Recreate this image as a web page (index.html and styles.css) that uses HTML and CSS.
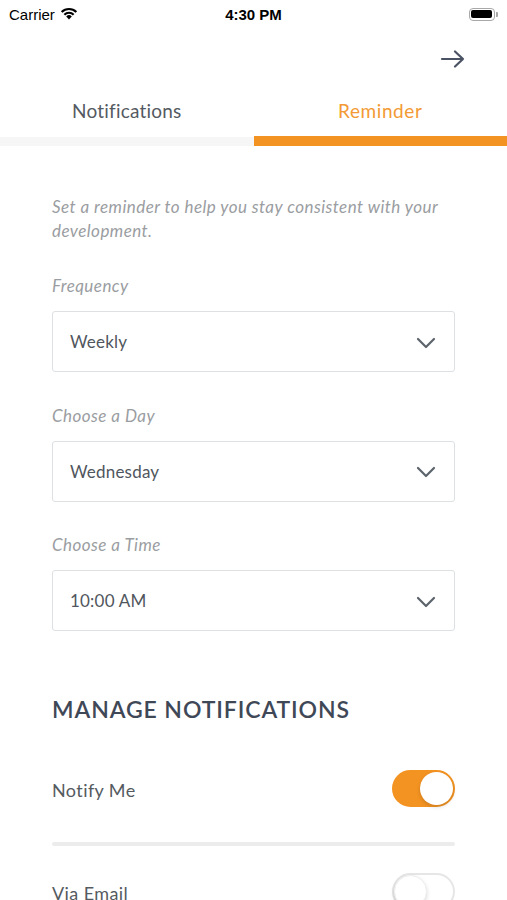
FILE: index.html
```html
<!DOCTYPE html>
<html>
<head>
<meta charset="utf-8">
<link rel="stylesheet" href="styles.css">
</head>
<body>
<div class="screen">
  <div class="status">
    <div class="carrier">Carrier
      <svg class="wifi" width="18" height="13" viewBox="0 0 18 13"><path d="M9 12.5 L6.2 9.4 A4 4 0 0 1 11.8 9.4 Z" fill="#000"/><path d="M3.6 6.9 A7.7 7.7 0 0 1 14.4 6.9 L12.9 8.4 A5.6 5.6 0 0 0 5.1 8.4 Z" fill="#000"/><path d="M0.9 4.2 A11.6 11.6 0 0 1 17.1 4.2 L15.6 5.7 A9.5 9.5 0 0 0 2.4 5.7 Z" fill="#000"/></svg>
    </div>
    <div class="time">4:30 PM</div>
    <div class="battery"><div class="batt-body"><div class="batt-fill"></div></div><div class="batt-tip"></div></div>
  </div>
  <div class="topbar">
    <svg class="arrow" width="26" height="20" viewBox="0 0 26 20"><path d="M2 10 H23 M15 2.5 L23 10 L15 17.5" fill="none" stroke="#4a5263" stroke-width="2.2" stroke-linecap="round" stroke-linejoin="round"/></svg>
  </div>
  <div class="tabs">
    <div class="tab"><span class="tab-label">Notifications</span><div class="tab-bar"></div></div>
    <div class="tab active"><span class="tab-label">Reminder</span><div class="tab-bar"></div></div>
  </div>
  <div class="content">
    <p class="desc">Set a reminder to help you stay consistent with your development.</p>
    <div class="field">
      <div class="label">Frequency</div>
      <div class="select"><span>Weekly</span><svg class="chev" width="20" height="12" viewBox="0 0 20 12"><path d="M2 2 L10 10 L18 2" fill="none" stroke="#5d636b" stroke-width="2.2" stroke-linecap="round" stroke-linejoin="round"/></svg></div>
    </div>
    <div class="field">
      <div class="label">Choose a Day</div>
      <div class="select"><span>Wednesday</span><svg class="chev" width="20" height="12" viewBox="0 0 20 12"><path d="M2 2 L10 10 L18 2" fill="none" stroke="#5d636b" stroke-width="2.2" stroke-linecap="round" stroke-linejoin="round"/></svg></div>
    </div>
    <div class="field">
      <div class="label">Choose a Time</div>
      <div class="select"><span>10:00 AM</span><svg class="chev" width="20" height="12" viewBox="0 0 20 12"><path d="M2 2 L10 10 L18 2" fill="none" stroke="#5d636b" stroke-width="2.2" stroke-linecap="round" stroke-linejoin="round"/></svg></div>
    </div>
    <h2 class="section">MANAGE NOTIFICATIONS</h2>
    <div class="row">
      <span class="row-label">Notify Me</span>
      <div class="switch on"><div class="knob"></div></div>
    </div>
    <div class="sep"></div>
    <div class="row">
      <span class="row-label">Via Email</span>
      <div class="switch"><div class="knob"></div></div>
    </div>
  </div>
</div>
</body>
</html>
```
FILE: styles.css
```css
* { box-sizing: border-box; }
html, body { margin: 0; padding: 0; background: #fff; }
body { font-family: Lato, "Noto Sans", sans-serif; color: #4f555c; }
.screen { width: 507px; height: 900px; overflow: hidden; }

.status { height: 28px; display: flex; align-items: center; justify-content: space-between; padding: 0 9px; font-family: "Liberation Sans", Arial, sans-serif; color: #000; }
.carrier { font-size: 15px; display: flex; align-items: center; gap: 5px; width: 120px; }
.wifi { margin-top: -2px; }
.time { font-size: 15px; font-weight: bold; }
.battery { width: 120px; display: flex; justify-content: flex-end; align-items: center; }
.batt-body { width: 26px; height: 13px; border: 1px solid #a8a8a8; border-radius: 4px; padding: 1.5px; }
.batt-fill { width: 100%; height: 100%; background: #000; border-radius: 2px; }
.batt-tip { width: 2px; height: 5px; background: #a8a8a8; border-radius: 0 1px 1px 0; margin-left: 1px; }

.topbar { height: 62px; display: flex; justify-content: flex-end; align-items: center; padding: 0 41px 0 0; }

.tabs { display: flex; }
.tab { flex: 1; display: flex; flex-direction: column; align-items: center; }
.tab-label { font-size: 19px; color: #545a62; height: 47px; line-height: 42px; letter-spacing: 0.2px; }
.tab.active .tab-label { color: #f39a34; letter-spacing: 0.6px; }
.tab-bar { width: 100%; height: 9px; background: #f6f6f6; }
.tab.active .tab-bar { background: #f39322; height: 10px; margin-top: -1px; }

.content { padding: 49px 52px 0 52px; }
.desc { margin: 0; font-style: italic; font-size: 17px; letter-spacing: 0.45px; line-height: 24px; color: #9a9da1; }
.field { margin-top: 31px; }
.field + .field { margin-top: 31.5px; }
.label { font-style: italic; font-size: 17px; letter-spacing: 0.45px; line-height: 24px; color: #9a9da1; }
.select { margin-top: 13px; height: 61px; border: 1.5px solid #dde1e4; border-radius: 3px; display: flex; align-items: center; justify-content: space-between; padding: 0 18px 0 17px; font-size: 17px; letter-spacing: 0.2px; color: #50565d; }
.chev { margin-top: 2px; }

.section { margin: 63px 0 0 0; font-size: 23px; font-weight: 600; letter-spacing: 0.9px; color: #3f4857; line-height: 30px; }
.row { display: flex; justify-content: space-between; align-items: center; height: 38px; margin-top: 45px; }
.row-label { font-size: 18px; letter-spacing: 0.4px; color: #555a61; margin-top: 3px; }
.switch { width: 63px; height: 37px; border-radius: 19px; background: #fff; border: 2px solid #e6e6e6; position: relative; }
.switch .knob { position: absolute; left: 0; top: 0; width: 33px; height: 33px; border-radius: 50%; background: #fff; box-shadow: 0 2px 4px rgba(0,0,0,0.15); border: 1px solid #eee; }
.switch.on { background: #f39322; border-color: #f39322; }
.switch.on .knob { left: auto; right: 0; border: none; }
.sep { height: 4px; background: #ececec; border-radius: 2px; margin-top: 35px; }
.row + .sep + .row { margin-top: 26px; }
```
